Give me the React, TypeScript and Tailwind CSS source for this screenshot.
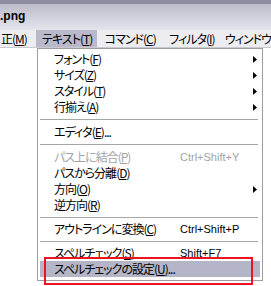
import type { ReactNode } from "react";

const jp = "font-['MS_UI_Gothic','Noto_Sans_CJK_JP',sans-serif] [font-feature-settings:'palt'] tracking-[-1px]";

type Item =
  | { type: "sep" }
  | {
      type: "item";
      label: string;
      key: string;
      tail?: string;
      shortcut?: string;
      sub?: boolean;
      disabled?: boolean;
      active?: boolean;
    };

const items: Item[] = [
  { type: "item", label: "フォント", key: "F", sub: true },
  { type: "item", label: "サイズ", key: "Z", sub: true },
  { type: "item", label: "スタイル", key: "T", sub: true },
  { type: "item", label: "行揃え", key: "A", sub: true },
  { type: "sep" },
  { type: "item", label: "エディタ", key: "E", tail: "..." },
  { type: "sep" },
  { type: "item", label: "パス上に結合", key: "P", shortcut: "Ctrl+Shift+Y", disabled: true },
  { type: "item", label: "パスから分離", key: "D" },
  { type: "item", label: "方向", key: "O", sub: true },
  { type: "item", label: "逆方向", key: "R" },
  { type: "sep" },
  { type: "item", label: "アウトラインに変換", key: "C", shortcut: "Ctrl+Shift+P" },
  { type: "sep" },
  { type: "item", label: "スペルチェック", key: "S", shortcut: "Shift+F7" },
  { type: "item", label: "スペルチェックの設定", key: "U", tail: "...", active: true },
];

function Mnemonic({ label, k, tail }: { label: string; k: string; tail?: string }) {
  return (
    <span className="whitespace-nowrap">
      {label}(<span className="underline underline-offset-[1px]">{k}</span>){tail}
    </span>
  );
}

function BarItem({ children, className }: { children: ReactNode; className: string }) {
  return <div className={`flex h-full items-center pl-[6px] ${className}`}>{children}</div>;
}

export default function App() {
  let sepCount = 0;
  return (
    <div className="relative h-[286px] w-[271px] overflow-hidden bg-white text-black">
      {/* title bar */}
      <div className="h-[4px] bg-[#8d8d9f]" />
      <div className="flex h-[26px] items-center bg-gradient-to-b from-[#bcbccb] to-[#e4e4ec] pb-[3px]">
        <span className="font-['Liberation_Sans',sans-serif] text-[12px] font-bold leading-none">.png</span>
      </div>

      {/* menu bar */}
      <div className={`flex h-[18px] border-b border-[#c9c9d2] bg-[#ededf1] text-[12px] leading-none ${jp}`}>
        <div className="flex h-full w-[37px] items-center pl-[1px]">
          <Mnemonic label="正" k="M" />
        </div>
        <BarItem className="w-[62px] bg-[#b8b9c9]">
          <Mnemonic label="テキスト" k="T" />
        </BarItem>
        <BarItem className="ml-[2px] w-[66px]">
          <Mnemonic label="コマンド" k="C" />
        </BarItem>
        <BarItem className="w-[57px]">
          <Mnemonic label="フィルタ" k="I" />
        </BarItem>
        <BarItem className="flex-1 whitespace-nowrap">ウィンドウ</BarItem>
      </div>

      {/* dropdown */}
      <div className="pl-[37px]">
        <div className={`w-[226px] border border-[#9d9d9d] bg-white px-[2px] pt-[2px] pb-[3px] text-[12px] ${jp}`}>
          {items.map((it, i) => {
            if (it.type === "sep") {
              sepCount++;
              return (
                <div key={i} className={`flex items-center ${sepCount <= 2 ? "h-[9px]" : "h-[8px]"}`}>
                  <div className="h-px w-[218px] bg-[#a6a6a6]" />
                </div>
              );
            }
            return (
              <div
                key={i}
                className={`flex h-[16px] items-center pr-[3px] leading-none ${
                  it.active ? "bg-[#b4b5c6]" : ""
                } ${it.disabled ? "text-[#a3a3a3]" : "text-black"}`}
              >
                <div className="w-[140px] pl-[14px]">
                  <Mnemonic label={it.label} k={it.key} tail={it.tail} />
                </div>
                {it.shortcut && (
                  <span className="font-['Liberation_Sans',sans-serif] text-[11px] tracking-normal whitespace-nowrap">
                    {it.shortcut}
                  </span>
                )}
                {it.sub && (
                  <svg className="ml-auto" width="4" height="7" viewBox="0 0 4 7">
                    <path d="M0 0L4 3.5L0 7Z" fill="#000" />
                  </svg>
                )}
              </div>
            );
          })}
        </div>
      </div>

      {/* red annotation box */}
      <div className="absolute left-[44px] top-[257px] h-[28px] w-[209px] border-2 border-[#ea1520]" />
    </div>
  );
}
